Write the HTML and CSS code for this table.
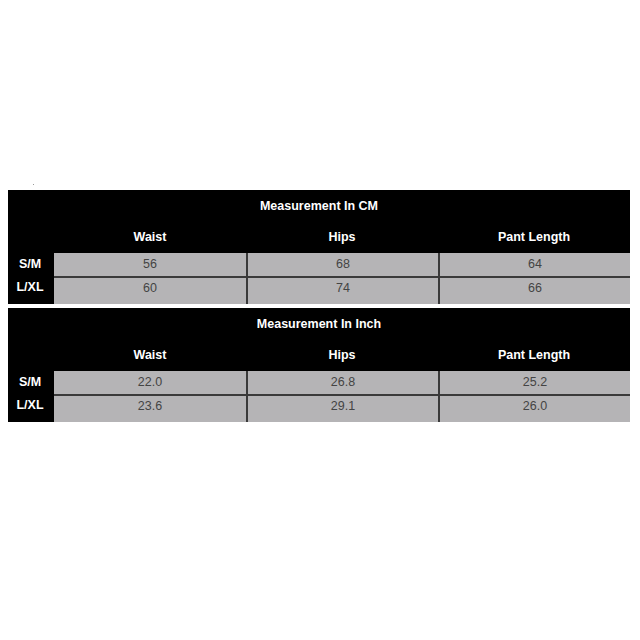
FILE: index.html
```html
<!DOCTYPE html>
<html>
<head>
<meta charset="utf-8">
<link rel="stylesheet" href="styles.css">
</head>
<body>
<div class="page">
  <span class="speck"></span>
  <div class="size-table">
    <div class="title">Measurement In CM</div>
    <div class="head-row">
      <div class="corner"></div>
      <div class="hcell">Waist</div>
      <div class="hcell">Hips</div>
      <div class="hcell">Pant Length</div>
    </div>
    <div class="data-row first">
      <div class="label">S/M</div>
      <div class="cell">56</div>
      <div class="cell sep">68</div>
      <div class="cell sep">64</div>
    </div>
    <div class="data-row last">
      <div class="label">L/XL</div>
      <div class="cell">60</div>
      <div class="cell sep">74</div>
      <div class="cell sep">66</div>
    </div>
  </div>
  <div class="size-table">
    <div class="title">Measurement In Inch</div>
    <div class="head-row">
      <div class="corner"></div>
      <div class="hcell">Waist</div>
      <div class="hcell">Hips</div>
      <div class="hcell">Pant Length</div>
    </div>
    <div class="data-row first">
      <div class="label">S/M</div>
      <div class="cell">22.0</div>
      <div class="cell sep">26.8</div>
      <div class="cell sep">25.2</div>
    </div>
    <div class="data-row last">
      <div class="label">L/XL</div>
      <div class="cell">23.6</div>
      <div class="cell sep">29.1</div>
      <div class="cell sep">26.0</div>
    </div>
  </div>
</div>
</body>
</html>
```

FILE: styles.css
```css
html, body {
  margin: 0;
  padding: 0;
  background: #ffffff;
}
body {
  font-family: "Liberation Sans", Arial, sans-serif;
  font-size: 12.5px;
}
.page {
  width: 640px;
  height: 640px;
  padding: 190px 0 0 8px;
  box-sizing: border-box;
  display: flex;
  flex-direction: column;
  gap: 4px;
  position: relative;
}
.speck {
  position: absolute;
  left: 33px;
  top: 184px;
  width: 1px;
  height: 1px;
  background: #9a9a9a;
}
.size-table {
  width: 622px;
  background: #000000;
  display: flex;
  flex-direction: column;
}
.title {
  height: 32px;
  line-height: 32px;
  text-align: center;
  color: #ffffff;
  font-weight: bold;
}
.head-row,
.data-row {
  display: grid;
  grid-template-columns: 46px 192px 192px 192px;
}
.head-row {
  height: 31px;
}
.hcell {
  color: #ffffff;
  font-weight: bold;
  text-align: center;
  line-height: 31px;
}
.label {
  color: #ffffff;
  font-weight: bold;
  text-align: center;
  line-height: 23px;
  padding-right: 2px;
}
.data-row.first {
  height: 23px;
}
.data-row.last {
  height: 28px;
}
.cell {
  background: #b5b4b6;
  color: #444444;
  text-align: center;
  line-height: 23px;
}
.data-row.last .cell {
  border-top: 2px solid #3a3a3a;
  line-height: 21px;
}
.cell.sep {
  border-left: 2px solid #3a3a3a;
}
```
